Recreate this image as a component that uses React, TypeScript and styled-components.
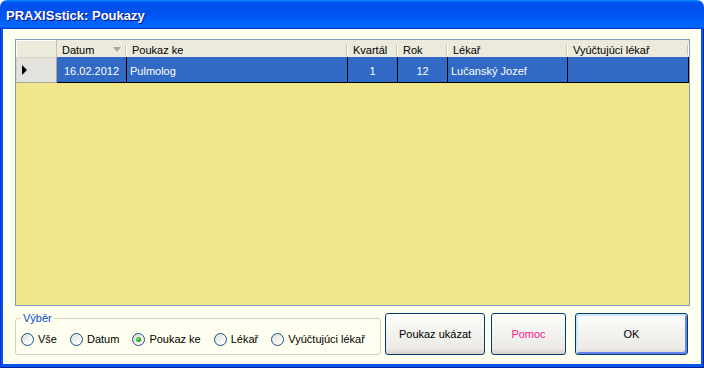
import React from 'react';
import styled, { createGlobalStyle } from 'styled-components';

const GlobalStyle = createGlobalStyle`
  html, body {
    margin: 0;
    padding: 0;
    background: #ffffff;
  }
  body {
    width: 704px;
    height: 368px;
    overflow: hidden;
    font-family: 'Liberation Sans', Arial, sans-serif;
    font-size: 11px;
    color: #000;
  }
`;

const COLS = '41px 70px 221px 50px 50px 120px 121px';

const Window = styled.div`
  width: 704px;
  height: 368px;
  display: flex;
  flex-direction: column;
  border-radius: 7px 7px 0 0;
  overflow: hidden;
`;

const TitleBar = styled.div`
  flex: none;
  height: 29px;
  display: flex;
  align-items: center;
  padding: 1px 0 0 6px;
  box-sizing: border-box;
  background: linear-gradient(180deg, #0997ff, #0053ee 8%, #0050ee 40%, #0066ff 88%, #0066ff 93%, #005bff 95%, #003dd7 96%, #003dd7);
  color: #fff;
  font: bold 13px 'Liberation Sans', Arial, sans-serif;
  text-shadow: 1px 1px #0f1089;
`;

const Frame = styled.div`
  flex: 1;
  display: flex;
  padding: 0 3px 4px 3px;
  background: #0a55ec;
  box-shadow: inset 1px 0 #0831d9, inset -1px 0 #001ea0, inset 0 -1px #001ea0;
`;

const Client = styled.div`
  flex: 1;
  display: flex;
  flex-direction: column;
  padding: 10px 11px 7px 12px;
  background: #fffff0;
`;

const Grid = styled.div`
  flex: none;
  height: 267px;
  box-sizing: border-box;
  border: 1px solid #7f9db9;
  background: #f0e68c;
`;

const HeaderRow = styled.div`
  display: grid;
  grid-template-columns: ${COLS};
  height: 17px;
  background: #ebeadb;
`;

const HeaderCell = styled.div<{ $corner?: boolean }>`
  position: relative;
  display: flex;
  align-items: center;
  padding: 2px 0 0 5px;
  box-sizing: border-box;
  white-space: nowrap;
  overflow: hidden;
  ${p => p.$corner && `
    padding: 0;
    border-right: 1px solid #c7c5b2;
    box-shadow: inset 1px 1px #fff;
  `}
  ${p => !p.$corner && `
    &::after {
      content: '';
      position: absolute;
      right: 1px;
      top: 5px;
      width: 1px;
      height: 10px;
      background: #c7c5b2;
      box-shadow: 1px 0 #fff;
    }
  `}
`;

const SortArrow = styled.span`
  margin-left: auto;
  margin-right: 6px;
  width: 0;
  height: 0;
  border-left: 4px solid transparent;
  border-right: 4px solid transparent;
  border-top: 5px solid #a7a6aa;
`;

const DataRow = styled.div`
  display: grid;
  grid-template-columns: ${COLS};
  height: 26px;
`;

const RowHeader = styled.div`
  display: flex;
  align-items: center;
  padding-left: 5px;
  box-sizing: border-box;
  background: #e3e2dc;
  border: 1px solid #aca899;
  border-top-color: #d6d4c8;
  border-left-color: #d6d4c8;
`;

const RowArrow = styled.span`
  width: 0;
  height: 0;
  border-top: 5px solid transparent;
  border-bottom: 5px solid transparent;
  border-left: 5px solid #000;
`;

const Cell = styled.div<{ $align?: 'left' | 'center' }>`
  display: flex;
  align-items: center;
  justify-content: ${p => (p.$align === 'center' ? 'center' : 'flex-start')};
  padding: 2px ${p => (p.$align === 'center' ? '0' : '3px')} 0;
  box-sizing: border-box;
  background: #316ac5;
  color: #fff;
  border-right: 1px solid #000;
  border-bottom: 1px solid #000;
  white-space: nowrap;
  overflow: hidden;
`;

const BottomRow = styled.div`
  display: flex;
  align-items: flex-start;
  margin-top: 6px;
`;

const GroupBox = styled.fieldset`
  margin: 0;
  width: 366px;
  box-sizing: border-box;
  padding: 7px 4px 8px 5px;
  border: 1px solid #d0d0bf;
  border-radius: 3px;
`;

const Legend = styled.legend`
  padding: 0 2px;
  color: #0046d5;
  font-size: 11px;
  line-height: 13px;
`;

const RadioRow = styled.div`
  display: flex;
  align-items: center;
  gap: 13px;
  height: 14px;
`;

const RadioItem = styled.label`
  display: flex;
  align-items: center;
  gap: 4px;
  white-space: nowrap;
`;

const RadioCircle = styled.span<{ $checked?: boolean }>`
  position: relative;
  width: 13px;
  height: 13px;
  box-sizing: border-box;
  border-radius: 50%;
  border: 1px solid #1c5180;
  background: linear-gradient(135deg, #dcdcd7 0%, #f4f4f0 60%, #ffffff 100%);
  ${p => p.$checked && `
    &::after {
      content: '';
      position: absolute;
      left: 3px;
      top: 3px;
      width: 5px;
      height: 5px;
      border-radius: 50%;
      background: radial-gradient(circle at 35% 35%, #7be07a, #21a121 60%, #0b7a0c);
    }
  `}
`;

const Button = styled.button<{ $w: number; $ml: number; $default?: boolean; $pink?: boolean }>`
  flex: none;
  width: ${p => p.$w}px;
  height: 42px;
  margin: 1px 0 0 ${p => p.$ml}px;
  padding: 0;
  box-sizing: border-box;
  border: 1px solid #003c74;
  border-radius: 3px;
  background: linear-gradient(180deg, #ffffff 0%, #f4f4f0 40%, #ecebe6 86%, #d6d0c5 100%);
  font-family: 'Liberation Sans', Arial, sans-serif;
  font-size: 11px;
  color: ${p => (p.$pink ? '#ff1493' : '#000')};
  ${p => p.$default && `
    box-shadow: inset 2px 2px #cee7ff, inset -2px -2px #6982ee, inset 0 0 0 2px #a8c4f5;
  `}
`;

const columns = [
  { label: 'Datum', sort: true },
  { label: 'Poukaz ke' },
  { label: 'Kvartál' },
  { label: 'Rok' },
  { label: 'Lékař' },
  { label: 'Vyúčtujúci lékař' },
];

const row: { value: string; align: 'left' | 'center' }[] = [
  { value: '16.02.2012', align: 'center' },
  { value: 'Pulmolog', align: 'left' },
  { value: '1', align: 'center' },
  { value: '12', align: 'center' },
  { value: 'Lučanský Jozef', align: 'left' },
  { value: '', align: 'left' },
];

const radios = [
  { label: 'Vše' },
  { label: 'Datum' },
  { label: 'Poukaz ke', checked: true },
  { label: 'Lékař' },
  { label: 'Vyúčtujúci lékař' },
];

export default function App() {
  return (
    <>
      <GlobalStyle />
      <Window>
        <TitleBar>PRAXISstick: Poukazy</TitleBar>
        <Frame>
          <Client>
            <Grid>
              <HeaderRow>
                <HeaderCell $corner />
                {columns.map(c => (
                  <HeaderCell key={c.label}>
                    {c.label}
                    {c.sort && <SortArrow />}
                  </HeaderCell>
                ))}
              </HeaderRow>
              <DataRow>
                <RowHeader>
                  <RowArrow />
                </RowHeader>
                {row.map((c, i) => (
                  <Cell key={i} $align={c.align}>{c.value}</Cell>
                ))}
              </DataRow>
            </Grid>
            <BottomRow>
              <GroupBox>
                <Legend>Výběr</Legend>
                <RadioRow>
                  {radios.map(r => (
                    <RadioItem key={r.label}>
                      <RadioCircle $checked={r.checked} />
                      {r.label}
                    </RadioItem>
                  ))}
                </RadioRow>
              </GroupBox>
              <Button $w={100} $ml={4}>Poukaz ukázat</Button>
              <Button $w={75} $ml={6} $pink>Pomoc</Button>
              <Button $w={113} $ml={9} $default>OK</Button>
            </BottomRow>
          </Client>
        </Frame>
      </Window>
    </>
  );
}
